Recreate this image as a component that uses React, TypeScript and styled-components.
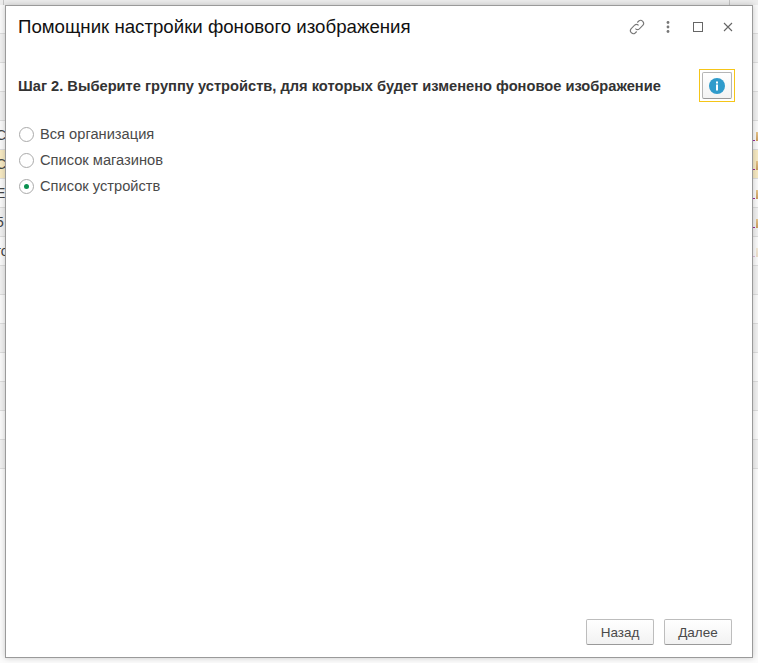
import React from 'react';
import styled, { createGlobalStyle } from 'styled-components';

const rows = Array.from({ length: 16 }, (_, i) => i);
const leftText: Record<number, string> = { 4: 'С', 5: 'С', 6: 'Е', 7: '5', 8: 'го' };

export default function App() {
  return <>
    <GlobalStyle/>
    <Page>
      <TopStrip>
        <TopCell $width={4}/>
        <TopCell $width={726}/>
      </TopStrip>
      <BackList>
        {rows.map(i => (
          <BackRow key={i} $active={i === 5} $odd={i % 2 === 1}>
            <BackLeft>{leftText[i]}</BackLeft>
            {i >= 4 && i <= 8 && <BackRight $faded={i === 8}><Dots/><Price/></BackRight>}
          </BackRow>
        ))}
      </BackList>

      <Modal>
        <Header>
          <Title>Помощник настройки фонового изображения</Title>
          <WindowTools>
            <ToolIcon title="link">
              <svg width="18" height="18" viewBox="0 0 18 18" fill="none" stroke="#777" strokeWidth="1.1">
                <path d="M7.4 10.6a3 3 0 0 0 4.2 0l3.4-3.4a3 3 0 0 0-4.2-4.2L9.3 4.5"/>
                <path d="M10.6 7.4a3 3 0 0 0-4.2 0L3 10.8a3 3 0 0 0 4.2 4.2l1.5-1.5"/>
              </svg>
            </ToolIcon>
            <ToolIcon title="menu">
              <svg width="18" height="18" viewBox="0 0 18 18" fill="#777">
                <circle cx="9" cy="4.5" r="1.4"/>
                <circle cx="9" cy="9" r="1.4"/>
                <circle cx="9" cy="13.5" r="1.4"/>
              </svg>
            </ToolIcon>
            <ToolIcon title="maximize">
              <svg width="18" height="18" viewBox="0 0 18 18" fill="none" stroke="#666" strokeWidth="1">
                <rect x="4.5" y="4.5" width="9" height="9"/>
              </svg>
            </ToolIcon>
            <ToolIcon title="close">
              <svg width="18" height="18" viewBox="0 0 18 18" fill="none" stroke="#666" strokeWidth="1.1">
                <path d="M5 5l8 8M13 5l-8 8"/>
              </svg>
            </ToolIcon>
          </WindowTools>
        </Header>

        <StepRow>
          <StepTitle>Шаг 2. Выберите группу устройств, для которых будет изменено фоновое изображение</StepTitle>
          <FocusFrame>
            <InfoButton>
              <svg width="18" height="18" viewBox="0 0 18 18">
                <circle cx="9" cy="9" r="8" fill="#2f9bcb"/>
                <rect x="8" y="7.5" width="2" height="6" fill="#fff"/>
                <rect x="8" y="4.5" width="2" height="2" fill="#fff"/>
              </svg>
            </InfoButton>
          </FocusFrame>
        </StepRow>

        <RadioGroup>
          <RadioRow>
            <RadioCircle/>
            Вся организация
          </RadioRow>
          <RadioRow>
            <RadioCircle/>
            Список магазинов
          </RadioRow>
          <RadioRow>
            <RadioCircle $checked/>
            Список устройств
          </RadioRow>
        </RadioGroup>

        <Footer>
          <FooterButton>Назад</FooterButton>
          <FooterButton>Далее</FooterButton>
        </Footer>
      </Modal>
    </Page>
  </>
}

const GlobalStyle = createGlobalStyle`
  html, body {
    margin: 0;
    padding: 0;
    background: #fff;
    overflow: hidden;
  }
`

const Page = styled.div`
  position: relative;
  width: 758px;
  height: 663px;
  overflow: hidden;
  background: #fbfbfb;
  font-family: "Liberation Sans", Arial, sans-serif;
`

const TopStrip = styled.div`
  display: flex;
  height: 5px;
  background: #ececec;
`

const TopCell = styled.div<{ $width: number }>`
  box-sizing: border-box;
  width: ${p => p.$width}px;
  border-right: 1px solid #c4c4c4;
`

const BackList = styled.div`
  display: flex;
  flex-direction: column;
`

const BackRow = styled.div<{ $active?: boolean; $odd?: boolean }>`
  display: flex;
  justify-content: space-between;
  align-items: center;
  box-sizing: border-box;
  height: 29px;
  border-bottom: 1px solid #dcdcdc;
  background: ${p => p.$active ? '#f6e9c2' : p.$odd ? '#f0f0f0' : '#f9f9f9'};
  overflow: hidden;
`

const BackLeft = styled.span`
  font-size: 14px;
  color: #444;
  margin-left: -4px;
  white-space: nowrap;
`

const BackRight = styled.span<{ $faded?: boolean }>`
  display: flex;
  align-items: flex-end;
  gap: 1px;
  padding-top: 2px;
  opacity: ${p => p.$faded ? 0.3 : 1};
`

const Price = styled.span`
  width: 2px;
  height: 9px;
  background: linear-gradient(#e6c48a, #c89a5c);
`

const Dots = styled.span`
  width: 2px;
  height: 1px;
  background: #9b2a9b;
`

const Modal = styled.div`
  position: absolute;
  left: 5px;
  top: 5px;
  width: 748px;
  height: 653px;
  box-sizing: border-box;
  display: flex;
  flex-direction: column;
  background: #fff;
  border: 1px solid #9a9a9a;
  box-shadow: 0 0 6px rgba(0, 0, 0, .2);
`

const Header = styled.div`
  display: flex;
  justify-content: space-between;
  align-items: center;
  height: 42px;
  padding: 0 15px 0 12px;
  flex-shrink: 0;
`

const Title = styled.div`
  font-size: 18.67px;
  color: #111;
`

const WindowTools = styled.div`
  display: flex;
  align-items: center;
  gap: 12px;
`

const ToolIcon = styled.span`
  display: flex;
  width: 18px;
  height: 18px;

  &:first-child {
    margin-right: 1px;
  }
`

const StepRow = styled.div`
  display: flex;
  justify-content: space-between;
  align-items: center;
  padding: 21px 17px 0 12px;
`

const StepTitle = styled.div`
  font-size: 14.67px;
  font-weight: bold;
  color: #333;
`

const FocusFrame = styled.div`
  box-sizing: border-box;
  width: 36px;
  height: 33px;
  padding: 2px;
  border: 1px solid #f5c518;
`

const InfoButton = styled.button`
  display: flex;
  align-items: center;
  justify-content: center;
  box-sizing: border-box;
  width: 30px;
  height: 27px;
  padding: 0;
  border: 1px solid #b5b5b5;
  border-bottom-color: #999;
  border-radius: 2px;
  background: linear-gradient(#fff, #f3f3f3);
`

const RadioGroup = styled.div`
  display: flex;
  flex-direction: column;
  gap: 6px;
  padding: 22px 0 0 13px;
`

const RadioRow = styled.label`
  display: flex;
  align-items: center;
  gap: 6px;
  height: 20px;
  font-size: 14.67px;
  color: #4a4a4a;
`

const RadioCircle = styled.span<{ $checked?: boolean }>`
  display: flex;
  align-items: center;
  justify-content: center;
  box-sizing: border-box;
  width: 15px;
  height: 15px;
  border: 1px solid #aaa;
  border-radius: 50%;
  background: #fff;

  &::after {
    content: "";
    display: ${p => p.$checked ? 'block' : 'none'};
    width: 5px;
    height: 5px;
    border-radius: 50%;
    background: #0a9150;
  }
`

const Footer = styled.div`
  display: flex;
  justify-content: flex-end;
  gap: 10px;
  margin-top: auto;
  padding: 0 20px 12px 0;
`

const FooterButton = styled.button`
  box-sizing: border-box;
  width: 68px;
  height: 26px;
  padding: 0;
  font-family: inherit;
  font-size: 13.5px;
  color: #4a4a4a;
  border: 1px solid #bdbdbd;
  border-bottom-color: #999;
  border-radius: 2px;
  background: linear-gradient(#fff, #f2f2f2);
`
